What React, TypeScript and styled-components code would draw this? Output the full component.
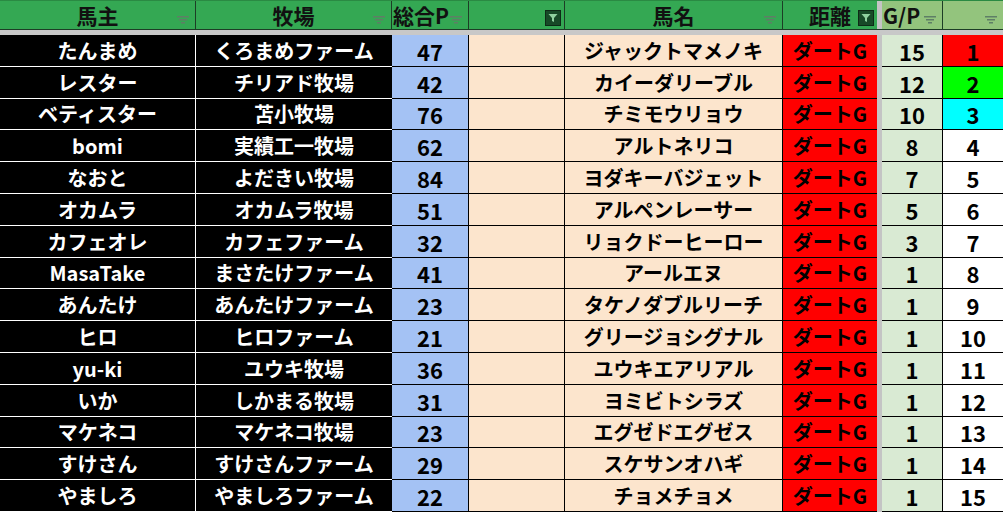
import React from 'react';
import styled, { createGlobalStyle, css } from 'styled-components';

const GlobalStyle = createGlobalStyle`
  html, body {
    margin: 0;
    padding: 0;
    background: #ffffff;
  }
  body {
    font-family: 'Noto Sans CJK JP', 'Noto Sans', sans-serif;
  }
`;

const COLS = '196px 196px 77px 96px 218px 94px 5px 61px 60px';

type Tone = 'black' | 'blue' | 'peach' | 'red' | 'mint' | 'white';

const toneBg: Record<Tone, string> = {
  black: '#000000',
  blue: '#a4c2f4',
  peach: '#fce5cd',
  red: '#ff0000',
  mint: '#d9ead3',
  white: '#ffffff',
};

const Sheet = styled.div`
  width: 1003px;
  height: 512px;
  display: flex;
  flex-direction: column;
  overflow: hidden;
  background: #ffffff;
`;

const HeaderRow = styled.div`
  display: grid;
  grid-template-columns: ${COLS};
  height: 30px;
  flex: none;
  box-sizing: border-box;
  border-top: 1px solid #2a8a43;
  border-bottom: 1px solid #1d3d26;
`;

const HeadCell = styled.div<{ $light?: boolean; $last?: boolean; $left?: boolean }>`
  position: relative;
  display: flex;
  align-items: center;
  justify-content: ${(p) => (p.$left ? 'flex-start' : 'center')};
  padding-left: ${(p) => (p.$left ? '1px' : '0')};
  background: ${(p) => (p.$light ? '#93c47d' : '#34a853')};
  border-right: ${(p) => (p.$last ? 'none' : '1px solid #1d3d26')};
  box-sizing: border-box;
  font-size: 21px;
  font-weight: 700;
  color: #111111;
  line-height: 1;
`;

const Divider = styled.div`
  background: #c4c4c4;
`;

const Band = styled.div`
  height: 5px;
  flex: none;
  background: #c8c8c8;
`;

const Body = styled.div`
  flex: 1;
  display: grid;
  grid-template-rows: repeat(15, 1fr);
  min-height: 0;
`;

const Row = styled.div`
  display: grid;
  grid-template-columns: ${COLS};
  min-height: 0;
`;

const Cell = styled.div<{ $tone: Tone; $edge?: 'white' | 'black' | 'none'; $num?: boolean }>`
  display: flex;
  align-items: center;
  justify-content: center;
  box-sizing: border-box;
  background: ${(p) => toneBg[p.$tone]};
  font-size: ${(p) => (p.$num ? '22px' : '20px')};
  font-weight: 700;
  line-height: 1;
  padding-top: 1px;
  ${(p) =>
    p.$tone === 'black'
      ? css`
          color: #ffffff;
          border-bottom: 1px solid #ffffff;
        `
      : css`
          color: #000000;
          border-bottom: 1px solid #000000;
        `}
  border-right: ${(p) =>
    p.$edge === 'white' ? '1px solid #ffffff' : p.$edge === 'black' ? '1px solid #000000' : 'none'};
`;

const RankCell = styled(Cell)<{ $fill: string }>`
  background: ${(p) => p.$fill};
`;

const FilterMark = styled.svg`
  position: absolute;
  right: 6px;
  bottom: 5px;
`;

const ActiveFilter = styled.div`
  position: absolute;
  right: 3px;
  bottom: 3px;
  width: 16px;
  height: 16px;
  background: #174a27;
  border: 1px solid #0d2a16;
  box-sizing: border-box;
  display: flex;
  align-items: center;
  justify-content: center;
`;

function Filter({ active }: { active?: boolean }): JSX.Element {
  if (active) {
    return (
      <ActiveFilter>
        <svg width="10" height="10" viewBox="0 0 10 10">
          <path d="M0.5 1 H9.5 L6 5 V9 L4 8 V5 Z" fill="#8fd19e" />
        </svg>
      </ActiveFilter>
    );
  }
  return (
    <FilterMark width="12" height="8" viewBox="0 0 12 8">
      <rect x="0" y="0" width="12" height="1.5" fill="#5e7f66" />
      <rect x="2" y="3" width="8" height="1.5" fill="#5e7f66" />
      <rect x="4" y="6" width="4" height="1.5" fill="#5e7f66" />
    </FilterMark>
  );
}

const rankBg = (rank: number): string => {
  if (rank === 1) return '#ff0000';
  if (rank === 2) return '#00ff00';
  if (rank === 3) return '#00ffff';
  return '#ffffff';
};

const rows: [string, string, number, string, number, number][] = [
  ['たんまめ', 'くろまめファーム', 47, 'ジャックトマメノキ', 15, 1],
  ['レスター', 'チリアド牧場', 42, 'カイーダリーブル', 12, 2],
  ['ベティスター', '苫小牧場', 76, 'チミモウリョウ', 10, 3],
  ['bomi', '実績工一牧場', 62, 'アルトネリコ', 8, 4],
  ['なおと', 'よだきい牧場', 84, 'ヨダキーバジェット', 7, 5],
  ['オカムラ', 'オカムラ牧場', 51, 'アルペンレーサー', 5, 6],
  ['カフェオレ', 'カフェファーム', 32, 'リョクドーヒーロー', 3, 7],
  ['MasaTake', 'まさたけファーム', 41, 'アールエヌ', 1, 8],
  ['あんたけ', 'あんたけファーム', 23, 'タケノダブルリーチ', 1, 9],
  ['ヒロ', 'ヒロファーム', 21, 'グリージョシグナル', 1, 10],
  ['yu-ki', 'ユウキ牧場', 36, 'ユウキエアリアル', 1, 11],
  ['いか', 'しかまる牧場', 31, 'ヨミビトシラズ', 1, 12],
  ['マケネコ', 'マケネコ牧場', 23, 'エグゼドエグゼス', 1, 13],
  ['すけさん', 'すけさんファーム', 29, 'スケサンオハギ', 1, 14],
  ['やましろ', 'やましろファーム', 22, 'チョメチョメ', 1, 15],
];

function App(): JSX.Element {
  return (
    <Sheet>
      <GlobalStyle />
      <HeaderRow>
        <HeadCell>
          馬主
          <Filter />
        </HeadCell>
        <HeadCell>
          牧場
          <Filter />
        </HeadCell>
        <HeadCell $left>
          総合P
          <Filter />
        </HeadCell>
        <HeadCell>
          <Filter active />
        </HeadCell>
        <HeadCell>
          馬名
          <Filter />
        </HeadCell>
        <HeadCell $last>
          距離
          <Filter active />
        </HeadCell>
        <Divider />
        <HeadCell $light $left>
          G/P
          <Filter />
        </HeadCell>
        <HeadCell $light $last>
          <Filter />
        </HeadCell>
      </HeaderRow>
      <Band />
      <Body>
        {rows.map(([owner, farm, pts, horse, gp, rank]) => (
          <Row key={rank}>
            <Cell $tone="black" $edge="white">{owner}</Cell>
            <Cell $tone="black">{farm}</Cell>
            <Cell $tone="blue" $edge="black" $num>{pts}</Cell>
            <Cell $tone="peach" $edge="black" />
            <Cell $tone="peach" $edge="black">{horse}</Cell>
            <Cell $tone="red">ダートG</Cell>
            <Divider />
            <Cell $tone="mint" $edge="black" $num>{gp}</Cell>
            <RankCell $tone="white" $fill={rankBg(rank)} $num>{rank}</RankCell>
          </Row>
        ))}
      </Body>
    </Sheet>
  );
}

export default App;
